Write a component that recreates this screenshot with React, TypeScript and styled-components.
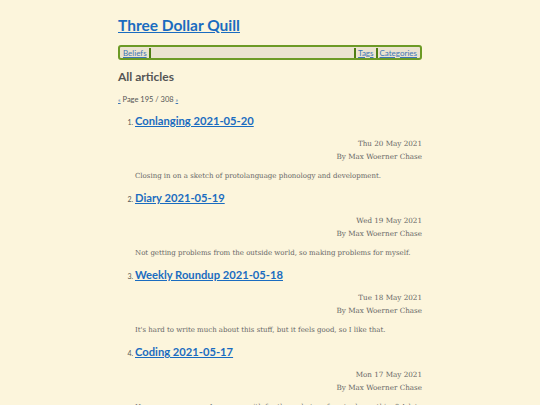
import React from 'react';
import styled, { createGlobalStyle } from 'styled-components';

const GlobalStyle = createGlobalStyle`
  html, body {
    margin: 0;
    padding: 0;
    background: #fcf5dc;
  }
  body {
    font-family: 'DejaVu Serif', serif;
    color: #555;
  }
`;

const Page = styled.div`
  width: 304px;
  margin: 0 auto;
  padding-top: 14px;
`;

const SiteTitle = styled.h1`
  margin: 0;
  font-family: Lato, sans-serif;
  font-size: 15.5px;
  line-height: 22px;
  font-weight: 700;
  a {
    color: #1a6cc0;
  }
`;

const Nav = styled.nav`
  display: flex;
  align-items: center;
  margin-top: 9px;
  height: 11px;
  padding: 0 2px;
  border: 2px solid #6c9a25;
  border-radius: 3px;
  background: #ebe3cf;
  font-family: Lato, sans-serif;
  font-size: 8px;
`;

const NavLink = styled.a`
  color: #3d76b5;
  padding: 0 1px;
`;

const Sep = styled.span`
  width: 2px;
  height: 10px;
  background: #4e7d12;
  margin: 0 1px;
`;

const Spacer = styled.div`
  flex: 1;
`;

const Heading = styled.h2`
  margin: 9px 0 0;
  font-family: Lato, sans-serif;
  font-size: 12px;
  line-height: 16px;
  font-weight: 700;
  color: #555;
`;

const Pager = styled.p`
  margin: 10px 0 0;
  font-family: Lato, sans-serif;
  font-size: 7.5px;
  line-height: 10px;
  color: #555;
  a {
    color: #3d76b5;
    font-size: 6px;
  }
`;

const List = styled.ol`
  margin: 7px 0 0;
  padding-left: 17px;
`;

const Item = styled.li`
  font-family: Lato, sans-serif;
  font-size: 7px;
  color: #555;
  margin-bottom: 7px;
`;

const ItemTitle = styled.h3`
  margin: 0;
  display: inline;
  font-family: Lato, sans-serif;
  font-size: 11.2px;
  line-height: 18px;
  font-weight: 700;
  a {
    color: #1a6cc0;
  }
`;

const Meta = styled.div`
  margin-top: 7px;
  text-align: right;
  font-family: 'DejaVu Serif', serif;
  font-size: 7.2px;
  line-height: 13px;
  color: #666;
`;

const Summary = styled.p`
  margin: 7px 0 0;
  font-family: 'DejaVu Serif', serif;
  font-size: 7px;
  line-height: 12px;
  color: #666;
`;

const articles = [
  {
    title: 'Conlanging 2021-05-20',
    date: 'Thu 20 May 2021',
    summary: 'Closing in on a sketch of protolanguage phonology and development.',
  },
  {
    title: 'Diary 2021-05-19',
    date: 'Wed 19 May 2021',
    summary: 'Not getting problems from the outside world, so making problems for myself.',
  },
  {
    title: 'Weekly Roundup 2021-05-18',
    date: 'Tue 18 May 2021',
    summary: "It's hard to write much about this stuff, but it feels good, so I like that.",
  },
  {
    title: 'Coding 2021-05-17',
    date: 'Mon 17 May 2021',
    summary: 'How many ways can I come up with for the code to refuse to do anything? A lot.',
  },
];

const App = () => {
  return (
    <>
      <GlobalStyle />
      <Page>
        <SiteTitle>
          <a href="#">Three Dollar Quill</a>
        </SiteTitle>
        <Nav>
          <NavLink href="#">Beliefs</NavLink>
          <Sep />
          <Spacer />
          <Sep />
          <NavLink href="#">Tags</NavLink>
          <Sep />
          <NavLink href="#">Categories</NavLink>
        </Nav>
        <Heading>All articles</Heading>
        <Pager>
          <a href="#">«</a> Page 195 / 308 <a href="#">»</a>
        </Pager>
        <List>
          {articles.map((article, index) => (
            <Item key={index}>
              <ItemTitle>
                <a href="#">{article.title}</a>
              </ItemTitle>
              <Meta>
                {article.date}
                <br />
                By Max Woerner Chase
              </Meta>
              <Summary>{article.summary}</Summary>
            </Item>
          ))}
        </List>
      </Page>
    </>
  );
};

export default App;
